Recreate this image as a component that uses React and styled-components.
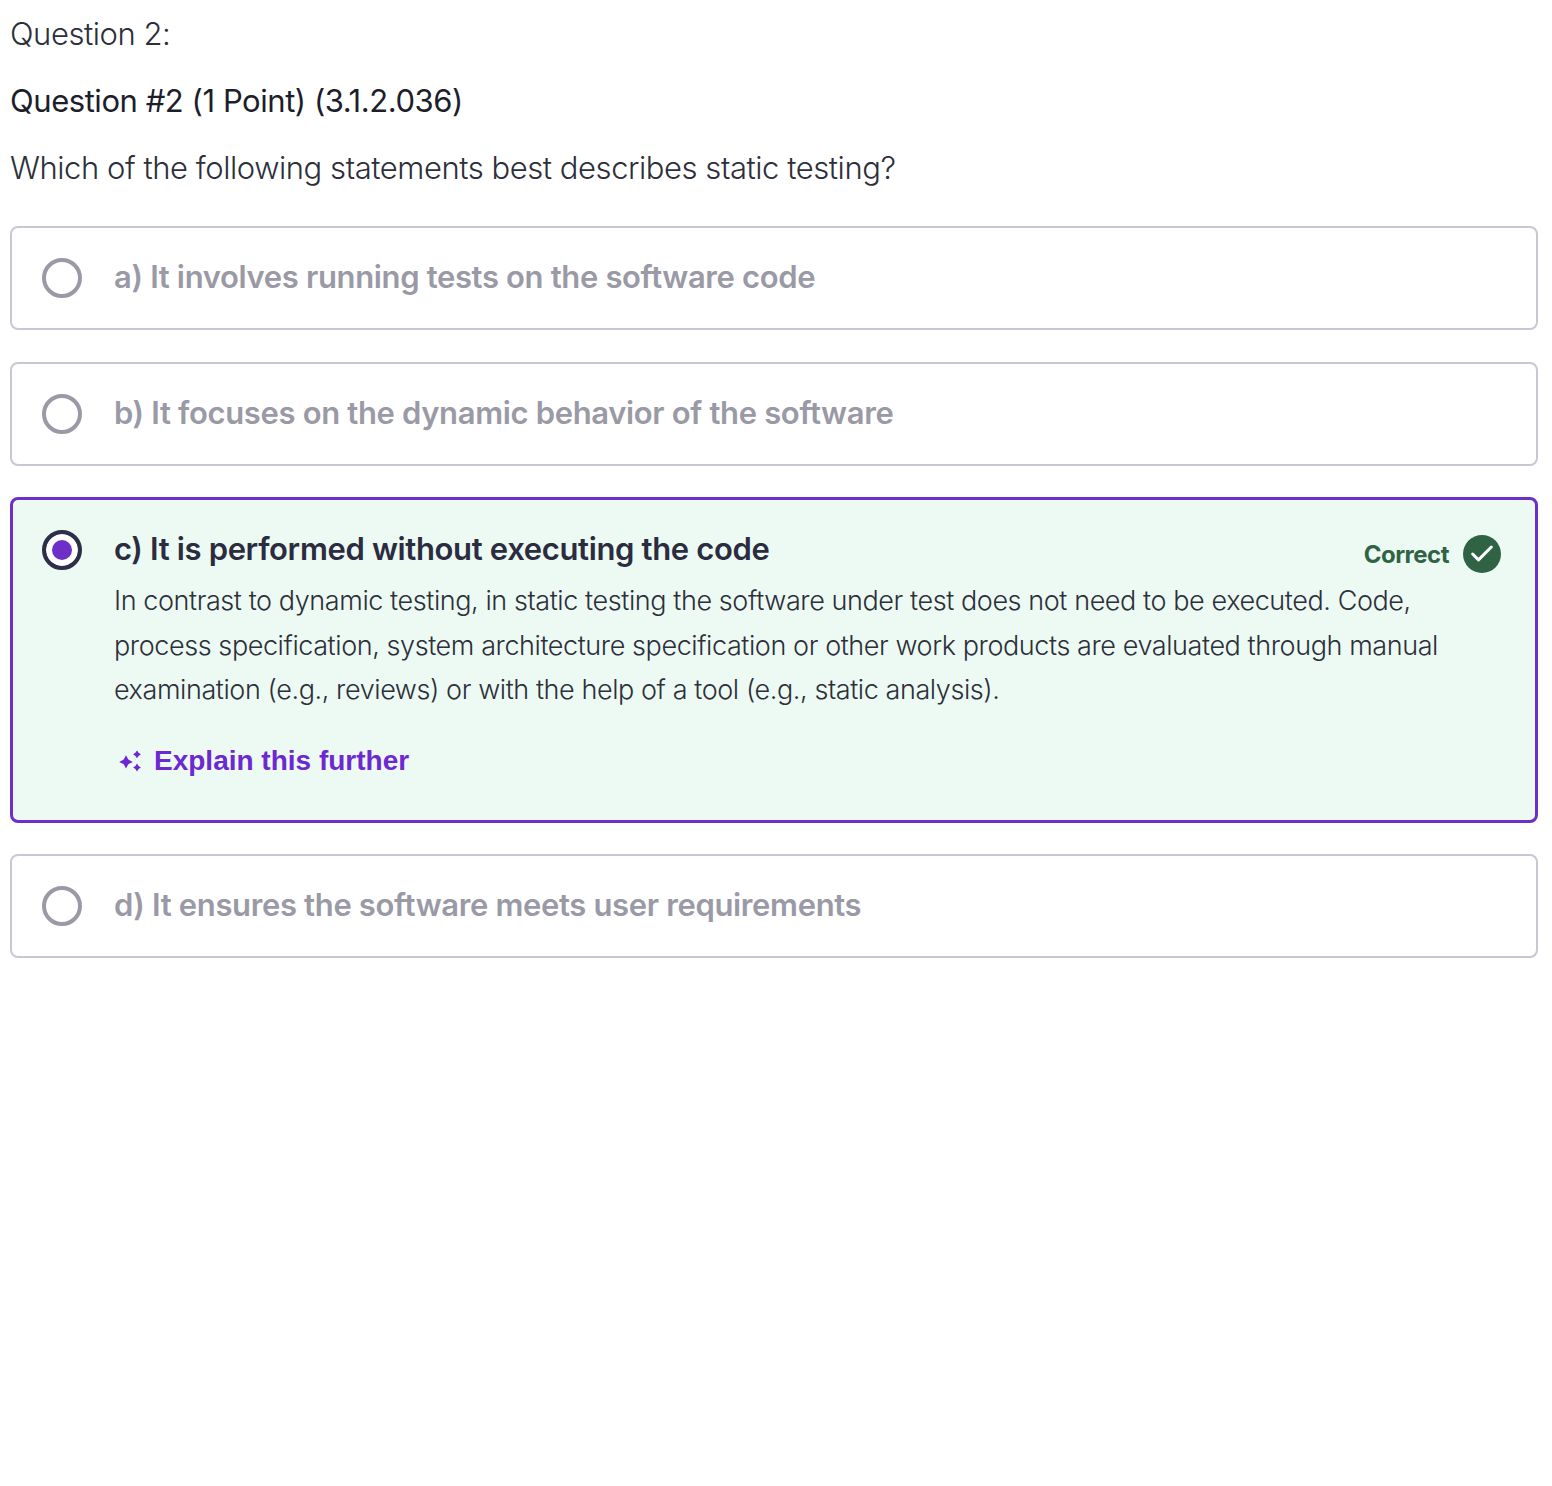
import styled, { createGlobalStyle } from "styled-components";
import { Check } from "lucide-react";

const GlobalStyle = createGlobalStyle`
  body {
    margin: 0;
    background: #fff;
    font-family: Inter, "Liberation Sans", sans-serif;
    color: #2d2f31;
  }
`;

const options = [
  { id: "a", text: "a) It involves running tests on the software code" },
  { id: "b", text: "b) It focuses on the dynamic behavior of the software" },
  { id: "c", text: "c) It is performed without executing the code", correct: true },
  { id: "d", text: "d) It ensures the software meets user requirements" },
];

const App = () => {
  return (
    <Page>
      <GlobalStyle />
      <Heading>Question 2:</Heading>
      <Title>Question #2 (1 Point) (3.1.2.036)</Title>
      <Prompt>Which of the following statements best describes static testing?</Prompt>
      <Options>
        {options.map((option) =>
          option.correct ? (
            <CorrectCard key={option.id}>
              <Radio $selected />
              <Body>
                <AnswerRow>
                  <Answer $selected>{option.text}</Answer>
                  <Status>
                    Correct
                    <StatusIcon>
                      <Check size={28} strokeWidth={2.6} color="#fff" />
                    </StatusIcon>
                  </Status>
                </AnswerRow>
                <Feedback>
                  In contrast to dynamic testing, in static testing the software under test does not
                  need to be executed. Code, process specification, system architecture specification
                  or other work products are evaluated through manual examination (e.g., reviews) or
                  with the help of a tool (e.g., static analysis).
                </Feedback>
                <Explain>
                  <svg width="24" height="24" viewBox="0 0 24 24" fill="#6d28d2">
                    <path d="M8 6.2l2.3 4.4 4.5 2.3-4.5 2.3-2.3 4.4-2.3-4.4-4.5-2.3 4.5-2.3z" />
                    <path d="M19 1.4l1.6 2.3 2.3 1.6-2.3 1.6-1.6 2.3-1.6-2.3-2.3-1.6 2.3-1.6z" />
                    <path d="M19 14.6l1.6 2.3 2.3 1.6-2.3 1.6-1.6 2.3-1.6-2.3-2.3-1.6 2.3-1.6z" />
                  </svg>
                  Explain this further
                </Explain>
              </Body>
            </CorrectCard>
          ) : (
            <Card key={option.id}>
              <Radio />
              <Answer>{option.text}</Answer>
            </Card>
          )
        )}
      </Options>
    </Page>
  );
};

export default App;

const Page = styled.div`
  min-height: 1486px;
  box-sizing: border-box;
  padding: 13px 14px 0 10px;
`;

const Heading = styled.div`
  font-size: 31px;
  line-height: 42px;
  font-weight: 300;
  letter-spacing: -0.45px;
  color: #2d2f3a;
`;

const Title = styled.div`
  margin-top: 24px;
  font-size: 31px;
  line-height: 44px;
  font-weight: 400;
  letter-spacing: -0.45px;
  color: #1d1e2c;
`;

const Prompt = styled.div`
  margin-top: 23px;
  font-size: 31px;
  line-height: 44px;
  font-weight: 300;
  letter-spacing: -0.45px;
  color: #2d2f3a;
`;

const Options = styled.div`
  margin-top: 36px;
  display: flex;
  flex-direction: column;
  gap: 32px;
`;

const Card = styled.div`
  box-sizing: border-box;
  height: 104px;
  padding: 0 30px;
  display: flex;
  align-items: center;
  gap: 32px;
  border: 2px solid #c7c8d3;
  border-radius: 8px;
  background: #fff;
`;

const CorrectCard = styled.div`
  box-sizing: border-box;
  height: 326px;
  margin: -1px 0;
  padding: 30px 34px 0 29px;
  display: flex;
  align-items: flex-start;
  gap: 32px;
  border: 3px solid #6d2fc8;
  border-radius: 8px;
  background: #ecfaf3;
`;

const Radio = styled.span`
  box-sizing: border-box;
  flex: none;
  width: 40px;
  height: 40px;
  border-radius: 50%;
  border: 4px solid ${(p) => (p.$selected ? "#2d2f45" : "#9a9aa6")};
  background: ${(p) => (p.$selected ? "#6d2fc8" : "#fff")};
  box-shadow: ${(p) => (p.$selected ? "inset 0 0 0 6px #fff" : "none")};
`;

const Body = styled.div`
  flex: 1;
  min-width: 0;
`;

const AnswerRow = styled.div`
  height: 40px;
  display: flex;
  justify-content: space-between;
  align-items: flex-start;
`;

const Answer = styled.div`
  margin-bottom: 2px;
  font-size: 31px;
  line-height: 38px;
  font-weight: 600;
  letter-spacing: -0.35px;
  color: ${(p) => (p.$selected ? "#2b2c3f" : "#9a9aa6")};
`;

const Feedback = styled.div`
  margin-top: 9px;
  font-size: 27px;
  line-height: 44.5px;
  font-weight: 300;
  letter-spacing: -0.42px;
  color: #2d2f3a;
`;

const Explain = styled.div`
  margin-top: 26px;
  display: flex;
  align-items: center;
  gap: 12px;
  padding-left: 4px;
  font-family: "Liberation Sans", Arial, sans-serif;
  font-size: 28px;
  line-height: 44px;
  font-weight: 700;
  color: #6d28d2;
`;

const Status = styled.div`
  flex: none;
  margin-top: 5px;
  display: flex;
  align-items: center;
  gap: 14px;
  font-size: 24px;
  font-weight: 700;
  letter-spacing: -0.5px;
  color: #2f6344;
`;

const StatusIcon = styled.span`
  width: 38px;
  height: 38px;
  border-radius: 50%;
  background: #2f6344;
  display: flex;
  align-items: center;
  justify-content: center;
`;
